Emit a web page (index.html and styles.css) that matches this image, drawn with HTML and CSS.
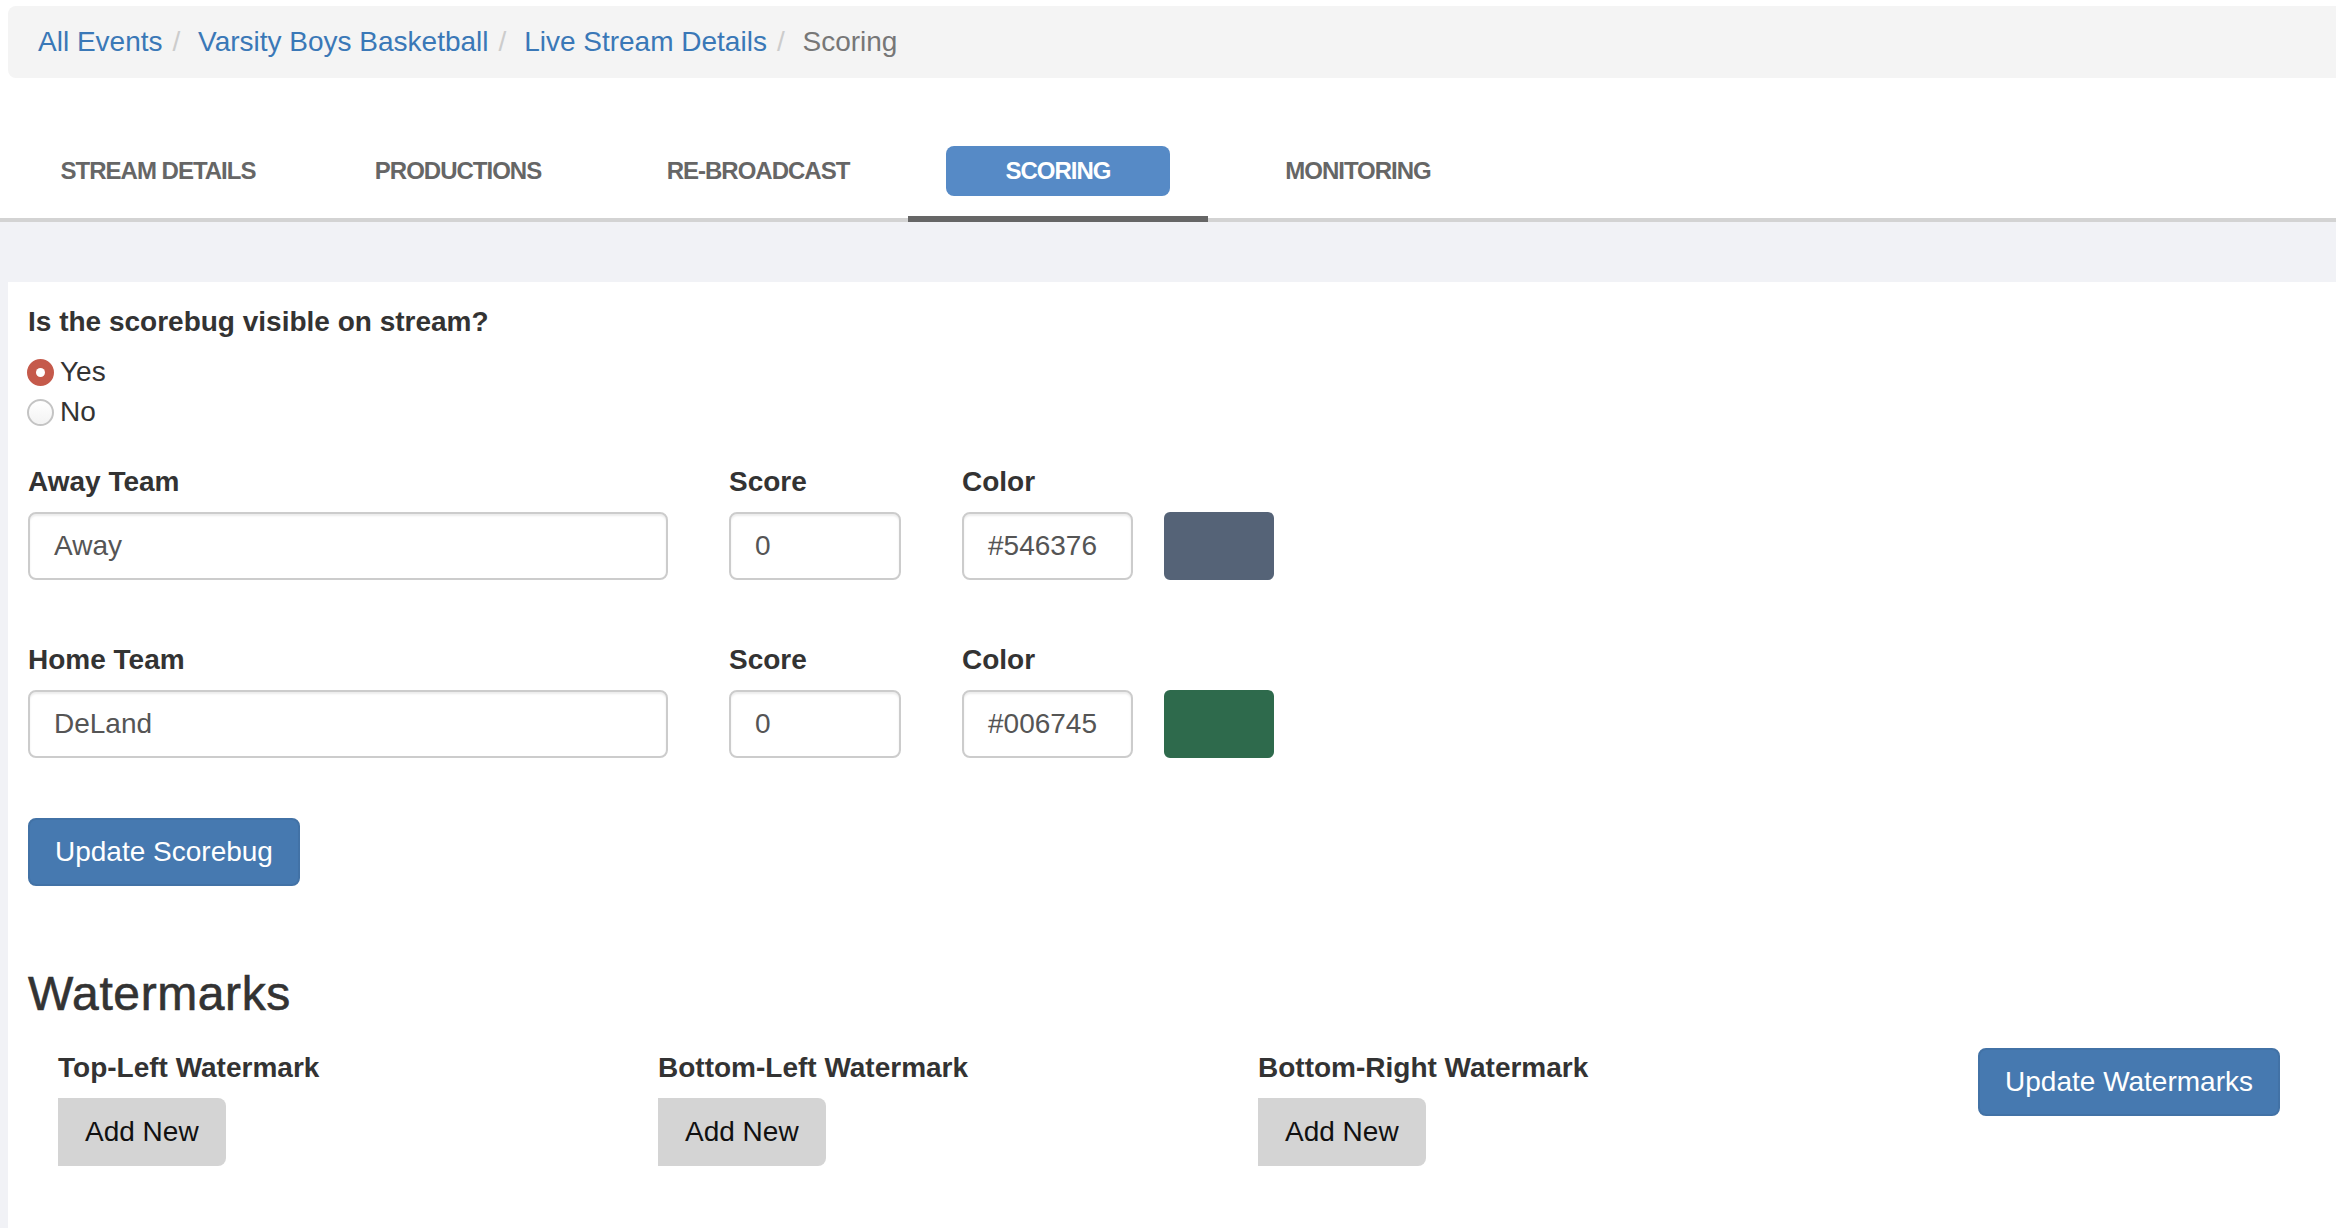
FILE: index.html
```html
<!DOCTYPE html>
<html lang="en">
<head>
<meta charset="utf-8">
<title>Scoring</title>
<link rel="stylesheet" href="styles.css">
</head>
<body>
<div class="top">
  <ol class="breadcrumb">
    <li><a href="#">All Events</a></li>
    <li><a href="#">Varsity Boys Basketball</a></li>
    <li><a href="#">Live Stream Details</a></li>
    <li class="active">Scoring</li>
  </ol>
  <ul class="tabs">
    <li class="tab"><a class="pill" href="#">STREAM DETAILS</a></li>
    <li class="tab"><a class="pill" href="#">PRODUCTIONS</a></li>
    <li class="tab"><a class="pill" href="#">RE-BROADCAST</a></li>
    <li class="tab active"><a class="pill" href="#">SCORING</a></li>
    <li class="tab"><a class="pill" href="#">MONITORING</a></li>
  </ul>
</div>
<div class="main">
  <div class="panel">
    <div class="question">Is the scorebug visible on stream?</div>
    <div class="radios">
      <label class="radio"><span class="dot checked"></span>Yes</label>
      <label class="radio"><span class="dot"></span>No</label>
    </div>

    <div class="team-row">
      <div class="field team">
        <label class="lbl">Away Team</label>
        <div class="input">Away</div>
      </div>
      <div class="field score">
        <label class="lbl">Score</label>
        <div class="input">0</div>
      </div>
      <div class="field color">
        <label class="lbl">Color</label>
        <div class="input">#546376</div>
      </div>
      <div class="swatch swatch-away"></div>
    </div>

    <div class="team-row second">
      <div class="field team">
        <label class="lbl">Home Team</label>
        <div class="input">DeLand</div>
      </div>
      <div class="field score">
        <label class="lbl">Score</label>
        <div class="input">0</div>
      </div>
      <div class="field color">
        <label class="lbl">Color</label>
        <div class="input">#006745</div>
      </div>
      <div class="swatch swatch-home"></div>
    </div>

    <button class="btn btn-primary btn-scorebug">Update Scorebug</button>

    <h3 class="heading">Watermarks</h3>
    <div class="wm-row">
      <div class="wm-col">
        <div class="lbl">Top-Left Watermark</div>
        <button class="btn btn-add">Add New</button>
      </div>
      <div class="wm-col">
        <div class="lbl">Bottom-Left Watermark</div>
        <button class="btn btn-add">Add New</button>
      </div>
      <div class="wm-col">
        <div class="lbl">Bottom-Right Watermark</div>
        <button class="btn btn-add">Add New</button>
      </div>
      <div class="wm-action">
        <button class="btn btn-primary">Update Watermarks</button>
      </div>
    </div>
  </div>
</div>
</body>
</html>
```

FILE: styles.css
```css
* { box-sizing: border-box; }

html, body {
  margin: 0;
  padding: 0;
}

body {
  font-family: "Liberation Sans", Arial, Helvetica, sans-serif;
  font-size: 28px;
  line-height: 40px;
  color: #333;
  background: #fff;
  width: 2336px;
  overflow: hidden;
}

.top {
  padding-top: 6px;
  background: #fff;
}

.breadcrumb {
  list-style: none;
  margin: 0 0 0 8px;
  padding: 16px 30px;
  background: #f4f4f4;
  border-radius: 8px 0 0 8px;
  display: flex;
  height: 72px;
}

.breadcrumb li + li::before {
  content: "/\00a0";
  padding: 0 10px;
  color: #ccc;
}

.breadcrumb a {
  color: #3a78b7;
  text-decoration: none;
}

.breadcrumb .active {
  color: #777;
}

.tabs {
  list-style: none;
  margin: 48px 0 0 0;
  padding: 0 0 0 8px;
  display: flex;
  border-bottom: 4px solid #d3d3d3;
}

.tab {
  width: 300px;
  padding: 20px 0;
  border-bottom: 6px solid transparent;
  margin-bottom: -4px;
}

.tab.active {
  border-bottom-color: #666;
}

.pill {
  display: block;
  height: 50px;
  line-height: 50px;
  margin: 0 38px;
  border-radius: 8px;
  text-align: center;
  text-decoration: none;
  font-size: 24px;
  font-weight: 700;
  letter-spacing: -1px;
  color: #666;
}

.tab.active .pill {
  background: #568ac6;
  color: #fff;
}

.main {
  background: #f1f2f6;
  padding: 60px 0 0 8px;
}

.panel {
  background: #fff;
  padding: 20px 56px 20px 20px;
  min-height: 946px;
}

.question {
  font-weight: 700;
  margin-bottom: 10px;
}

.radios {
  margin-bottom: 30px;
}

.radio {
  display: flex;
  align-items: center;
  height: 40px;
}

.dot {
  width: 27px;
  height: 27px;
  border-radius: 50%;
  border: 2px solid #c4c4c4;
  background: linear-gradient(#fff, #f3f3f3);
  margin-right: 6px;
  margin-left: -1px;
  display: flex;
  align-items: center;
  justify-content: center;
}

.dot.checked {
  background: #c55a4b;
  border-color: #c55a4b;
}

.dot.checked::after {
  content: "";
  width: 9px;
  height: 9px;
  border-radius: 50%;
  background: #fff;
}

.team-row {
  display: flex;
  align-items: flex-end;
}

.team-row.second {
  margin-top: 60px;
}

.field {
  display: flex;
  flex-direction: column;
}

.lbl {
  font-weight: 700;
  line-height: 40px;
  margin-bottom: 10px;
  display: block;
}

.team { width: 640px; }
.score { width: 172px; margin-left: 61px; }
.color { width: 171px; margin-left: 61px; }

.input {
  height: 68px;
  line-height: 64px;
  border: 2px solid #ccc;
  border-radius: 8px;
  padding: 0 24px;
  color: #555;
  background: #fff;
  box-shadow: inset 0 2px 2px rgba(0, 0, 0, 0.075);
}

.swatch {
  width: 110px;
  height: 68px;
  margin-left: 31px;
  border-radius: 6px;
}

.swatch-away { background: #556377; }
.swatch-home { background: #2e6a4c; }

.btn {
  font-family: inherit;
  font-size: 28px;
  height: 68px;
  line-height: 40px;
  padding: 0 25px;
  border-radius: 8px;
  border: 2px solid transparent;
  cursor: pointer;
}

.btn-primary {
  background: #4679b0;
  border-color: #4272a6;
  color: #fff;
}

.btn-scorebug {
  margin-top: 60px;
  display: block;
}

.heading {
  font-size: 48px;
  font-weight: 500;
  line-height: 53px;
  margin: 81px 0 28px 0;
  color: #333;
  letter-spacing: 0.6px;
  -webkit-text-stroke: 0.6px #333;
}

.wm-row {
  display: flex;
  align-items: flex-start;
}

.wm-col {
  width: 600px;
  padding-left: 30px;
}

.btn-add {
  background: #d4d4d4;
  border: none;
  color: #111;
  border-radius: 0 8px 8px 0;
  padding: 0 27px;
}

.wm-action {
  flex: 1;
  display: flex;
  justify-content: flex-end;
}
```
